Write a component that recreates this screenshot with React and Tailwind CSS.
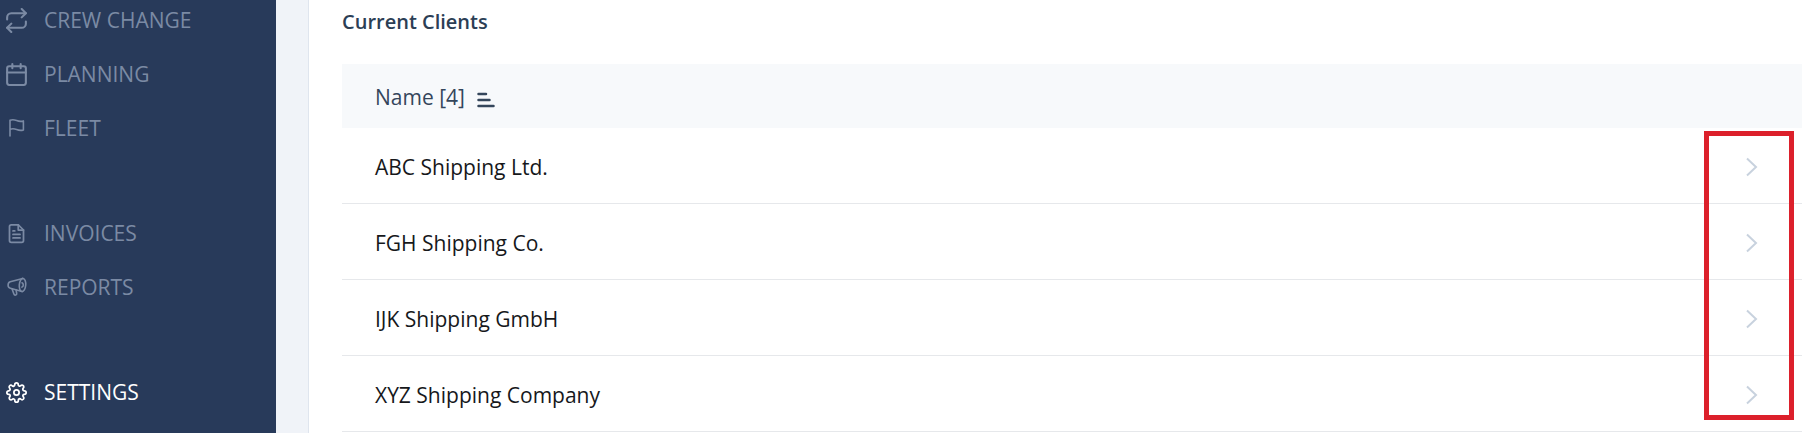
import { FiCalendar, FiFileText, FiRepeat, FiSettings } from "react-icons/fi";

function FlagIcon() {
  return (
    <svg viewBox="0 0 20 20" className="size-5" fill="none" stroke="currentColor" strokeWidth="1.6" strokeLinecap="round" strokeLinejoin="round" aria-hidden="true">
      <path d="M3 18V2.2c2.6-1 4.6-.5 6.600.3 2.200.900 4.200 1.300 6.800.4v9c-2.600.900-4.600.5-6.800-.4-2-.8-4-1.200-6.600-.2" />
    </svg>
  );
}

function MegaphoneIcon() {
  return (
    <svg viewBox="0 0 20 20" className="size-5" fill="none" stroke="currentColor" strokeWidth="1.6" strokeLinecap="round" strokeLinejoin="round" aria-hidden="true">
      <ellipse cx="15.5" cy="8" rx="3.2" ry="6.6" transform="rotate(5 15.5 8)" />
      <path d="M15.8 1.4 3.2 4.8C.3 5.8.4 10.6 3.4 11.2l11.6 3.300" />
      <path d="m5 11.7 1.9 5.400c.6 1.600 3.100 1.100 2.800-.6l-.6-3.600" />
      <path d="M15 5.800c1.700.6 1.700 3.600 0 4.300" />
    </svg>
  );
}

function SortIcon() {
  return (
    <svg viewBox="0 0 18 16" className="h-4 w-[18px]" fill="none" stroke="currentColor" strokeWidth="2.5" strokeLinecap="round" aria-hidden="true">
      <path d="M1.500 2h7.500M1.500 8h11M1.500 14h15" />
    </svg>
  );
}

function ChevronIcon() {
  return (
    <svg viewBox="0 0 12 20" className="h-5 w-3" fill="none" stroke="currentColor" strokeWidth="2" aria-hidden="true">
      <path d="m1 1.500 9 8.500-9 8.500" />
    </svg>
  );
}

const groups = [
  [
    { label: "CREW CHANGE", icon: <FiRepeat className="size-[25px]" /> },
    { label: "PLANNING", icon: <FiCalendar className="size-[25px]" /> },
    { label: "FLEET", icon: <FlagIcon /> },
  ],
  [
    { label: "INVOICES", icon: <FiFileText className="size-[21px]" /> },
    { label: "REPORTS", icon: <MegaphoneIcon /> },
  ],
  [{ label: "SETTINGS", icon: <FiSettings className="size-[21px]" />, active: true }],
];

const clients = ["ABC Shipping Ltd.", "FGH Shipping Co.", "IJK Shipping GmbH", "XYZ Shipping Company"];

export default function App() {
  return (
    <div className="flex min-h-screen bg-[#f0f3f8] font-['Open_Sans','Noto_Sans',sans-serif] text-[21px] leading-8">
      <nav className="flex w-[276px] shrink-0 flex-col gap-[51px] bg-[#283a5a]" aria-label="Main">
        {groups.map((items, i) => (
          <ul key={i} className={i === 0 ? "-mt-[7px]" : ""}>
            {items.map((item) => (
              <li key={item.label}>
                <a
                  href="#"
                  aria-current={item.active ? "page" : undefined}
                  className={`flex h-[54px] items-center gap-3.5 pl-[3px] ${item.active ? "text-white" : "text-[#7b8aa4]"}`}
                >
                  <span className="flex w-[27px] justify-center">{item.icon}</span>
                  {item.label}
                </a>
              </li>
            ))}
          </ul>
        ))}
      </nav>
      <main className="ml-8 min-w-0 flex-1 border-l border-[#dfe5ee] bg-white pt-1.5 pl-[33px]">
        <h2 className="text-xl leading-8 font-semibold text-[#2c3e55]">Current Clients</h2>
        <div className="relative mt-[26px]">
          <table className="w-full border-separate border-spacing-0 text-left">
            <thead>
              <tr className="h-16 bg-[#f7f9fb] text-[#34465b]">
                <th scope="col" className="pt-0.5 pb-0 pl-[33px] font-normal">
                  <button type="button" className="flex items-center gap-3">
                    Name [4]
                    <span className="pt-1.5">
                      <SortIcon />
                    </span>
                  </button>
                </th>
                <td />
              </tr>
            </thead>
            <tbody>
              {clients.map((name) => (
                <tr key={name} className="h-[76px] text-[#16181b]">
                  <td className="border-b border-[#e6e8eb] pt-0.5 pb-0 pl-[33px]">{name}</td>
                  <td className="w-24 border-b border-[#e6e8eb] pt-0.5 pb-0">
                    <a href="#" aria-label={`Open ${name}`} className="flex justify-center pr-1 text-[#c8d2de]">
                      <ChevronIcon />
                    </a>
                  </td>
                </tr>
              ))}
            </tbody>
          </table>
          <div className="pointer-events-none absolute top-[67px] right-2 bottom-3 w-[90px] border-5 border-[#dc202b]" />
        </div>
      </main>
    </div>
  );
}
